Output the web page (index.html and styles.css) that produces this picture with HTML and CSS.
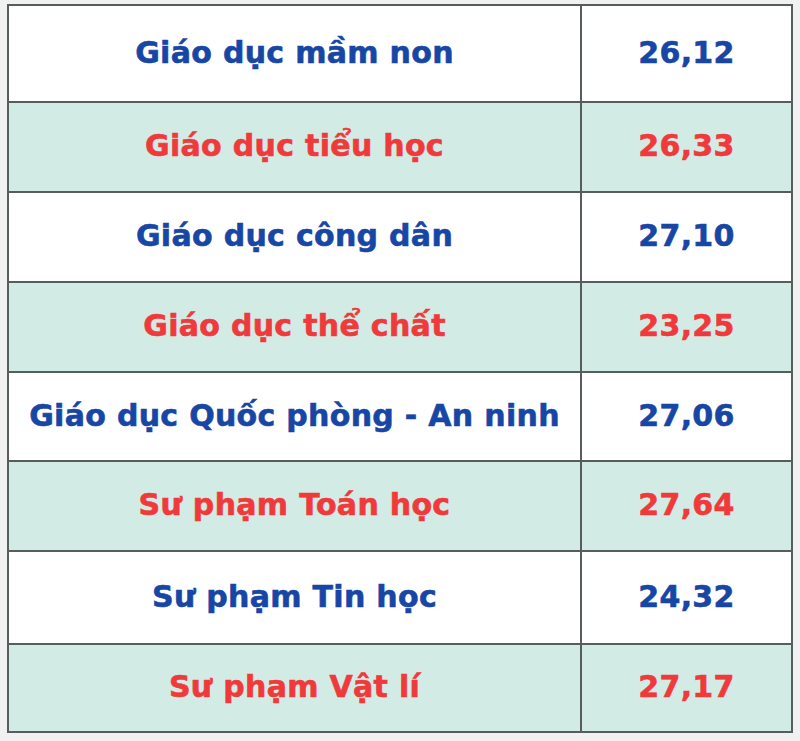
FILE: index.html
```html
<!DOCTYPE html>
<html lang="vi">
<head>
<meta charset="utf-8">
<title>Điểm chuẩn</title>
<link rel="stylesheet" href="styles.css">
</head>
<body>
<table class="scores">
  <tr class="r1 blue"><td class="name">Giáo dục mầm non</td><td class="num">26,12</td></tr>
  <tr class="alt red"><td class="name">Giáo dục tiểu học</td><td class="num">26,33</td></tr>
  <tr class="blue"><td class="name">Giáo dục công dân</td><td class="num">27,10</td></tr>
  <tr class="alt red"><td class="name">Giáo dục thể chất</td><td class="num">23,25</td></tr>
  <tr class="r5 blue"><td class="name">Giáo dục Quốc phòng - An ninh</td><td class="num">27,06</td></tr>
  <tr class="alt red"><td class="name">Sư phạm Toán học</td><td class="num">27,64</td></tr>
  <tr class="r7 blue"><td class="name">Sư phạm Tin học</td><td class="num">24,32</td></tr>
  <tr class="r8 alt red"><td class="name">Sư phạm Vật lí</td><td class="num">27,17</td></tr>
</table>
</body>
</html>
```

FILE: styles.css
```css
html, body {
  margin: 0;
  padding: 0;
  background: #f1f1f1;
}
body {
  padding: 4px 0 0 7px;
}
.scores {
  border-collapse: collapse;
  width: 786px;
  background: #ffffff;
  font-family: "DejaVu Sans", "Liberation Sans", sans-serif;
  font-weight: bold;
  font-size: 30px;
  letter-spacing: 0.3px;
  -webkit-text-stroke: 0.6px currentColor;
}
.scores td {
  border: 2px solid #575d5d;
  text-align: center;
  vertical-align: middle;
  padding: 0 0 3px 0;
  height: 85px;
}
.scores .name {
  width: 571px;
}
.scores .r1 td { height: 92px; }
.scores .r5 td { height: 84px; }
.scores .r7 td { height: 88px; }
.scores .r8 td { height: 83px; }
.alt { background: #d3ebe5; }
.blue { color: #1746a5; }
.red { color: #f0393b; }
```
